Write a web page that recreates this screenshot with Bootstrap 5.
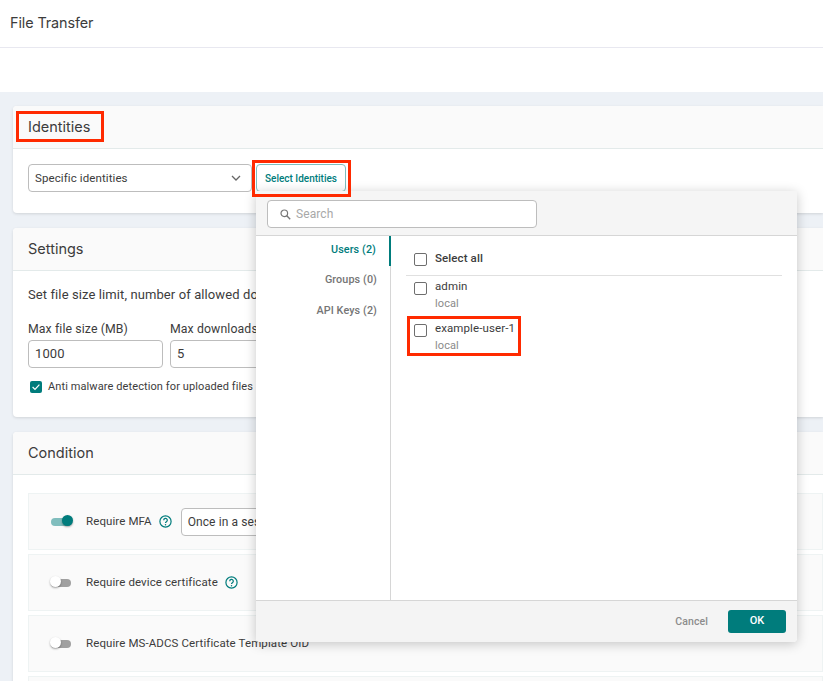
<!DOCTYPE html>
<html>
<head>
    <title>File Transfer</title>
    <link href="https://cdn.jsdelivr.net/npm/bootstrap@5.3.0/dist/css/bootstrap.min.css" rel="stylesheet">
    <style>
        html, body { height: 681px; overflow: hidden; }
        body { font-family: Roboto, "Liberation Sans", sans-serif; font-size: 13px; color: #3c3c3c; background: #fff; position: relative; letter-spacing: .1px; }

        .page-title { height: 48px; padding: 14px 10px 0; border-bottom: 1px solid #e8e8f0; font-family: Inter, "Open Sans", sans-serif; font-size: 14.4px; line-height: 18px; letter-spacing: -.1px; }
        .page-gap { height: 44px; }
        .page-body { background: #edf1f6; padding: 14px 0 0 13px; height: 589px; overflow: hidden; }

        .sect { background: #fff; border-radius: 4px 0 0 4px; box-shadow: 0 1px 3px rgba(0,0,0,.12); margin-bottom: 15px; }
        .sect-head { height: 43px; padding: 0 15px; line-height: 42px; background: #fafafa; border-bottom: 1px solid #e3eaea; font-family: Inter, "Open Sans", sans-serif; font-size: 14.5px; letter-spacing: 0; border-radius: 4px 0 0 0; }
        .sect-body { padding: 15px; }
        .sect-id { height: 107px; }
        .sect-set { height: 189px; }
        .sect-cond .sect-body { padding-top: 18px; padding-right: 0; }

        .fake-input { border: 1px solid #bdbdbd; border-radius: 4px; background: #fff; height: 28px; line-height: 26px; padding: 0 6px; }
        .sel-box { width: 224px; height: 28px; font-size: 11.5px; }
        .btn-select { height: 28px; width: 90px; padding: 0; margin-left: 4px; font-size: 10px; font-weight: 500; color: #007c7c; background: #fff; border: 1px solid #7fbdbd; border-radius: 4px; }

        .sect-set .sect-body { padding-top: 14px; }
        .set-text { margin-bottom: 15px; height: 20px; line-height: 20px; }
        .fld-label { line-height: 18px; margin-bottom: 2px; font-size: 12.3px; }
        .fld-input { width: 135px; height: 28px; }
        .fld-wrap { gap: 7px; }
        .malware { margin-top: 11px; font-size: 11px; line-height: 16px; padding-left: 2px; gap: 6px; }
        .check-on { width: 12px; height: 12px; border-radius: 2px; background: #007c7c; display: block; flex: none; }

        .cond-row { height: 57px; background: #fafafa; border: 1px solid #eef3f3; margin-bottom: 4px; padding-left: 22px; font-size: 11.5px; }
        .tog { width: 20px; height: 8px; border-radius: 4px; background: #a0a0a0; position: relative; display: block; margin-right: 15px; flex: none; }
        .tog::after { content: ""; position: absolute; top: -2.5px; left: -1px; width: 11px; height: 11px; border-radius: 50%; background: #fff; box-shadow: 0 1px 2px rgba(0,0,0,.35); }
        .tog-on { background: #80bdbd; }
        .tog-on::after { left: auto; right: -2px; background: #007c7c; }
        .hint { color: #007c7c; margin-left: 7px; display: block; flex: none; }
        .mfa-sel { width: 160px; margin-left: 9px; font-size: 12px; }

        .picker { position: absolute; left: 256px; top: 191px; width: 541px; height: 451px; background: #fff; box-shadow: 0 2px 12px rgba(0,0,0,.22); border-radius: 0 0 4px 4px; }
        .picker-top { height: 45px; background: #f5f5f5; border-bottom: 1px solid #d6d6d6; padding: 9px 11px; }
        .picker-search { width: 270px; height: 28px; color: #a8a8a8; font-size: 12px; padding-left: 12px; gap: 5px; line-height: 24px; }
        .picker-main { height: 364px; }
        .picker-side { width: 135px; border-right: 1px solid #d6d6d6; text-align: right; font-size: 10.8px; font-weight: 500; color: #757575; }
        .side-item { height: 31px; line-height: 28px; padding-right: 14px; margin-right: -1px; }
        .side-item.active-tab { color: #007c7c; border-right: 2px solid #007c7c; height: 30px; padding-right: 13px; line-height: 27px; }
        .side-item.tab-gap { height: 30px; }
        .picker-list { flex: 1; padding: 0 15px; }
        .all-row { height: 40px; padding-top: 7px; border-bottom: 1px solid #e0e0e0; font-weight: 500; font-size: 11.5px; }
        .box { width: 13px; height: 13px; border: 1.5px solid #6e6e6e; border-radius: 2px; flex: none; margin: 0 8px 0 8px; }
        .user-row { height: 42px; padding-top: 2px; font-size: 11.5px; line-height: 17px; }
        .user-row .box { margin-top: 4px; }
        .user-src { font-size: 11px; color: #8a8a8a; line-height: 17px; }
        .picker-foot { height: 42px; background: #f4f4f4; border-top: 1px solid #d6d6d6; padding-right: 11px; border-radius: 0 0 4px 4px; }
        .btn-cancel { color: #8c8c8c; font-size: 10.5px; font-weight: 500; margin-right: 20px; }
        .btn-ok { width: 58px; height: 23px; padding: 0; background: #007c7c; border: 0; border-radius: 3px; color: #fff; font-size: 11px; font-weight: 500; }

        .callout { position: absolute; border: 3px solid #ff2a00; pointer-events: none; }
        .callout-a { left: 16px; top: 111px; width: 88px; height: 31px; }
        .callout-b { left: 252px; top: 160px; width: 99px; height: 37px; }
        .callout-c { left: 407px; top: 316px; width: 114px; height: 40px; }
    </style>
</head>
<body>
<div class="page-title">File Transfer</div>
<div class="page-gap"></div>

<div class="page-body">
    <div class="sect sect-id">
        <div class="sect-head">Identities</div>
        <div class="sect-body d-flex">
            <div class="fake-input sel-box d-flex justify-content-between align-items-center">
                <span>Specific identities</span>
                <svg width="10" height="6" viewBox="0 0 10 6" class="me-1"><path d="M1 1l4 4 4-4" fill="none" stroke="#666" stroke-width="1.3"/></svg>
            </div>
            <button class="btn-select">Select Identities</button>
        </div>
    </div>

    <div class="sect sect-set">
        <div class="sect-head">Settings</div>
        <div class="sect-body">
            <div class="set-text">Set file size limit, number of allowed downloads and expiration</div>
            <div class="d-flex fld-wrap">
                <div>
                    <div class="fld-label">Max file size (MB)</div>
                    <div class="fake-input fld-input">1000</div>
                </div>
                <div>
                    <div class="fld-label">Max downloads</div>
                    <div class="fake-input fld-input">5</div>
                </div>
            </div>
            <div class="malware d-flex align-items-center">
                <span class="check-on">
                    <svg width="12" height="12" viewBox="0 0 12 12" class="d-block"><path d="M2.6 6l2.4 2.4 4.4-4.8" fill="none" stroke="#fff" stroke-width="1.2"/></svg>
                </span>
                <span>Anti malware detection for uploaded files</span>
            </div>
        </div>
    </div>

    <div class="sect sect-cond">
        <div class="sect-head">Condition</div>
        <div class="sect-body">
            <div class="cond-row d-flex align-items-center">
                <span class="tog tog-on"></span>
                <span>Require MFA</span>
                <svg class="hint" width="13" height="13" viewBox="0 0 13 13"><circle cx="6.5" cy="6.5" r="5.6" fill="none" stroke="currentColor" stroke-width="1.2"/><path d="M4.7 5.2a1.8 1.8 0 1 1 2.7 1.5c-.6.4-.9.7-.9 1.3" fill="none" stroke="currentColor" stroke-width="1.2"/><circle cx="6.5" cy="9.7" r=".75" fill="currentColor"/></svg>
                <div class="fake-input mfa-sel">Once in a session</div>
            </div>
            <div class="cond-row d-flex align-items-center">
                <span class="tog"></span>
                <span>Require device certificate</span>
                <svg class="hint" width="13" height="13" viewBox="0 0 13 13"><circle cx="6.5" cy="6.5" r="5.6" fill="none" stroke="currentColor" stroke-width="1.2"/><path d="M4.7 5.2a1.8 1.8 0 1 1 2.7 1.5c-.6.4-.9.7-.9 1.3" fill="none" stroke="currentColor" stroke-width="1.2"/><circle cx="6.5" cy="9.7" r=".75" fill="currentColor"/></svg>
            </div>
            <div class="cond-row d-flex align-items-center">
                <span class="tog"></span>
                <span>Require MS-ADCS Certificate Template OID</span>
            </div>
            <div class="cond-row"></div>
        </div>
    </div>
</div>

<div class="picker d-flex flex-column">
    <div class="picker-top">
        <div class="fake-input picker-search d-flex align-items-center">
            <svg width="11" height="11" viewBox="0 0 11 11"><circle cx="4.3" cy="4.3" r="3.3" fill="none" stroke="#777" stroke-width="1.2"/><path d="M6.8 6.8l3.4 3.4" stroke="#777" stroke-width="1.4"/></svg>
            <span>Search</span>
        </div>
    </div>
    <div class="picker-main d-flex">
        <div class="picker-side">
            <div class="side-item active-tab">Users (2)</div>
            <div class="side-item">Groups (0)</div>
            <div class="side-item tab-gap">API Keys (2)</div>
        </div>
        <div class="picker-list">
            <div class="all-row d-flex align-items-center">
                <span class="box"></span>
                <span>Select all</span>
            </div>
            <div class="user-row d-flex">
                <span class="box"></span>
                <div>admin<div class="user-src">local</div></div>
            </div>
            <div class="user-row d-flex">
                <span class="box"></span>
                <div>example-user-1<div class="user-src">local</div></div>
            </div>
        </div>
    </div>
    <div class="picker-foot d-flex justify-content-end align-items-center">
        <span class="btn-cancel">Cancel</span>
        <button class="btn-ok">OK</button>
    </div>
</div>

<div class="callout callout-a"></div>
<div class="callout callout-b"></div>
<div class="callout callout-c"></div>

<script src="https://cdn.jsdelivr.net/npm/bootstrap@5.3.0/dist/js/bootstrap.bundle.min.js"></script>
</body>
</html>
